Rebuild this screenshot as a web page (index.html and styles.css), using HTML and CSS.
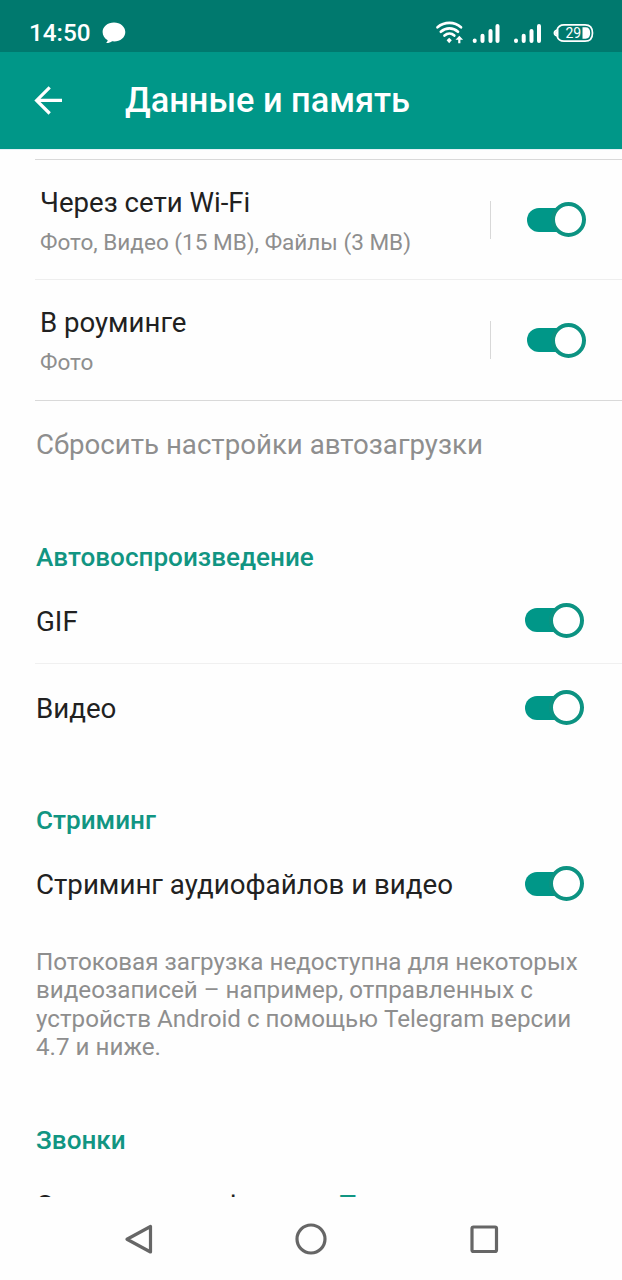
FILE: index.html
```html
<!DOCTYPE html>
<html lang="ru">
<head>
<meta charset="utf-8">
<title>Данные и память</title>
<link rel="stylesheet" href="styles.css">
</head>
<body>
<div class="screen">
  <div class="status">
    <span class="clock">14:50</span>
    <svg class="bubble" width="24" height="22" viewBox="0 0 24 22"><path d="M12 .5C5.700.5.6 4.700.6 10c0 3.700 2 6.500 5.100 8.200-.4 1.400-1 2.100-1.600 2.900 2.500.1 4.500-.7 6-1.800 7.200.9 13.200-3.300 13.200-9.300C23.300 4.700 18.300.5 12 .5z" fill="#fff"/></svg>
    <svg class="system" width="160" height="26" viewBox="0 0 160 26" fill="none" stroke="#fff">
      <g stroke-width="2.700" stroke-linecap="round">
        <path d="M2.500 7.300C9.500 1.500 19.500 1.500 26 7.300"/>
        <path d="M5.800 11.700C11 7.300 18 7.300 23 11.700"/>
        <path d="M9.500 15.600C12.500 13 16.500 13 19.300 15.600"/>
      </g>
      <path d="M14.200 17.700l2.600 2.600-2.600 2.900-2.600-2.900z" fill="#fff" stroke="none"/>
      <path d="M24.300 15.700l3.800 4h-2.700v3.500h-2.200v-3.500h-2.700z" fill="#fff" stroke="none"/>
      <g stroke-width="4" stroke-linecap="round">
        <path d="M39.700 20.500v.4M47.500 15.700v5.200M55.500 10.900v10M62.500 6v15"/>
        <path d="M81 20.500v.4M88.700 15.700v5.200M96.500 10.900v10M104 6v15"/>
      </g>
      <path d="M129 4.800h21q7.500 0 7.500 8.200t-7.500 8.200h-21q-5.500 0-7-5.200-2.600-1-2.600-3t2.600-3q1.500-5.200 7-5.200z" stroke-width="1.700"/>
      <path d="M119.500 13l4-4v8z" fill="#fff" stroke="none"/>
      <path d="M147.500 7.300h3q4.700 0 4.700 5.700t-4.700 5.700h-3z" fill="#fff" stroke="none"/>
      <text class="charge" x="130.500" y="18">29</text>
    </svg>
  </div>
  <header class="bar">
    <svg class="back" width="30" height="30" viewBox="0 0 30 30" fill="none" stroke="#fff" stroke-width="3.200"><path d="M28 15.400H3M15.700 2.300L2.600 15.400l13.100 13.100"/></svg>
    <h1 class="title">Данные и память</h1>
  </header>
  <main class="content">
    <section class="downloads">
      <div class="network">
        <div class="labels"><div class="name">Через сети Wi-Fi</div><div class="detail">Фото, Видео (15 MB), Файлы (3 MB)</div></div>
        <div class="divider"></div><div class="toggle"><div class="knob"></div></div>
      </div>
      <div class="network">
        <div class="labels"><div class="name">В роуминге</div><div class="detail">Фото</div></div>
        <div class="divider"></div><div class="toggle"><div class="knob"></div></div>
      </div>
    </section>
    <div class="reset">Сбросить настройки автозагрузки</div>
    <h2 class="heading autoplay">Автовоспроизведение</h2>
    <div class="row ruled"><span>GIF</span><div class="toggle"><div class="knob"></div></div></div>
    <div class="row"><span>Видео</span><div class="toggle"><div class="knob"></div></div></div>
    <h2 class="heading streaming">Стриминг</h2>
    <div class="row spaced"><span>Стриминг аудиофайлов и видео</span><div class="toggle"><div class="knob"></div></div></div>
    <p class="note">Потоковая загрузка недоступна для некоторых<br>видеозаписей – например, отправленных с<br>устройств Android с помощью Telegram версии<br>4.7 и ниже.</p>
    <h2 class="heading calls">Звонки</h2>
    <div class="row saving"><span class="option">Экономия трафика</span><span class="value">Только в роуминге</span></div>
  </main>
  <nav class="nav">
    <svg width="32" height="34" viewBox="0 0 32 34"><path d="M27.500 4.500v25.500L4 17.250z"/></svg>
    <svg width="34" height="34" viewBox="0 0 34 34"><circle cx="17" cy="17" r="14"/></svg>
    <svg width="32" height="34" viewBox="0 0 32 34"><rect x="4" y="5" width="24.500" height="24.500" rx="1.500"/></svg>
  </nav>
</div>
</body>
</html>
```
FILE: styles.css
```css
* { box-sizing: border-box; }
body { margin: 0; background: #fefefe; font-family: Roboto, sans-serif; color: #212121; }
.screen { width: 622px; height: 1280px; display: flex; flex-direction: column; overflow: hidden; }
.status { height: 52px; flex: none; background: #00796e; display: flex; align-items: center; padding: 14px 27px 0 29px; color: #fff; }
.clock { font-size: 24.300px; line-height: 30px; font-weight: 500; width: 73px; white-space: nowrap; }
.system { margin-left: auto; }
.charge { font: 14px Roboto, sans-serif; fill: #fff; stroke: none; }
.bar { height: 97px; flex: none; background: #009788; display: flex; align-items: center; padding: 0 0 2px 33.500px; color: #fff; }
.title { margin: 0 0 0 61.500px; font-size: 34.350px; line-height: 40px; font-weight: 500; white-space: nowrap; }
.content { height: 1048px; flex: none; overflow: hidden; border-top: 1px solid #e3f1f6; padding-top: 9px; }
.downloads { margin-left: 35px; border-top: 1px solid #d9d9d9; border-bottom: 1px solid #d9d9d9; height: 242px; }
.network { height: 120px; display: flex; align-items: center; padding: 0 36px 0 5px; border-bottom: 1px solid #eee; }
.network:last-child { border-bottom: 0; }
.labels { flex: 1; padding-top: 4px; white-space: nowrap; }
.name { font-size: 27.600px; line-height: 36px; }
.detail { font-size: 22.550px; line-height: 32px; margin-top: 6px; color: #8e8e8e; }
.divider { width: 1px; height: 38px; background: #d8d8d8; margin-right: 35px; }
.toggle { position: relative; width: 60px; height: 36px; flex: none; display: flex; justify-content: flex-end; align-items: center; }
.toggle::before { content: ""; position: absolute; left: 1px; top: 6px; width: 44px; height: 24px; border-radius: 12px; background: #009788; }
.knob { position: relative; width: 35px; height: 35px; border: 4px solid #0c9382; border-radius: 50%; background: #fff; }
.reset { font-size: 27.650px; line-height: 36px; color: #8e8e8e; margin: 26px 0 0 36px; white-space: nowrap; }
.heading { margin: 0 0 0 36px; font-size: 26.100px; line-height: 34px; font-weight: 500; color: #119582; }
.autoplay { margin-top: 77px; }
.row { height: 87px; margin-left: 35px; padding: 0 38px 0 1px; display: flex; align-items: center; justify-content: space-between; font-size: 27.700px; line-height: 36px; white-space: nowrap; }
.row span { padding-top: 3px; }
.ruled { border-bottom: 1px solid #f0f0f0; margin-top: 3px; }
.streaming { margin-top: 52px; }
.spaced { margin-top: 3px; }
.note { margin: 21px 0 0 36px; font-size: 24.180px; line-height: 28.300px; color: #8e8e8e; white-space: nowrap; }
.calls { margin-top: 62px; }
.saving { margin-top: 4px; }
.option { letter-spacing: .33px; }
.value { color: #119582; }
.nav { height: 83px; flex: none; display: grid; grid-template-columns: repeat(3, 172.500px); justify-content: center; justify-items: center; align-items: center; }
.nav svg { fill: none; stroke: #666; stroke-width: 3.200; stroke-linejoin: round; }
```
